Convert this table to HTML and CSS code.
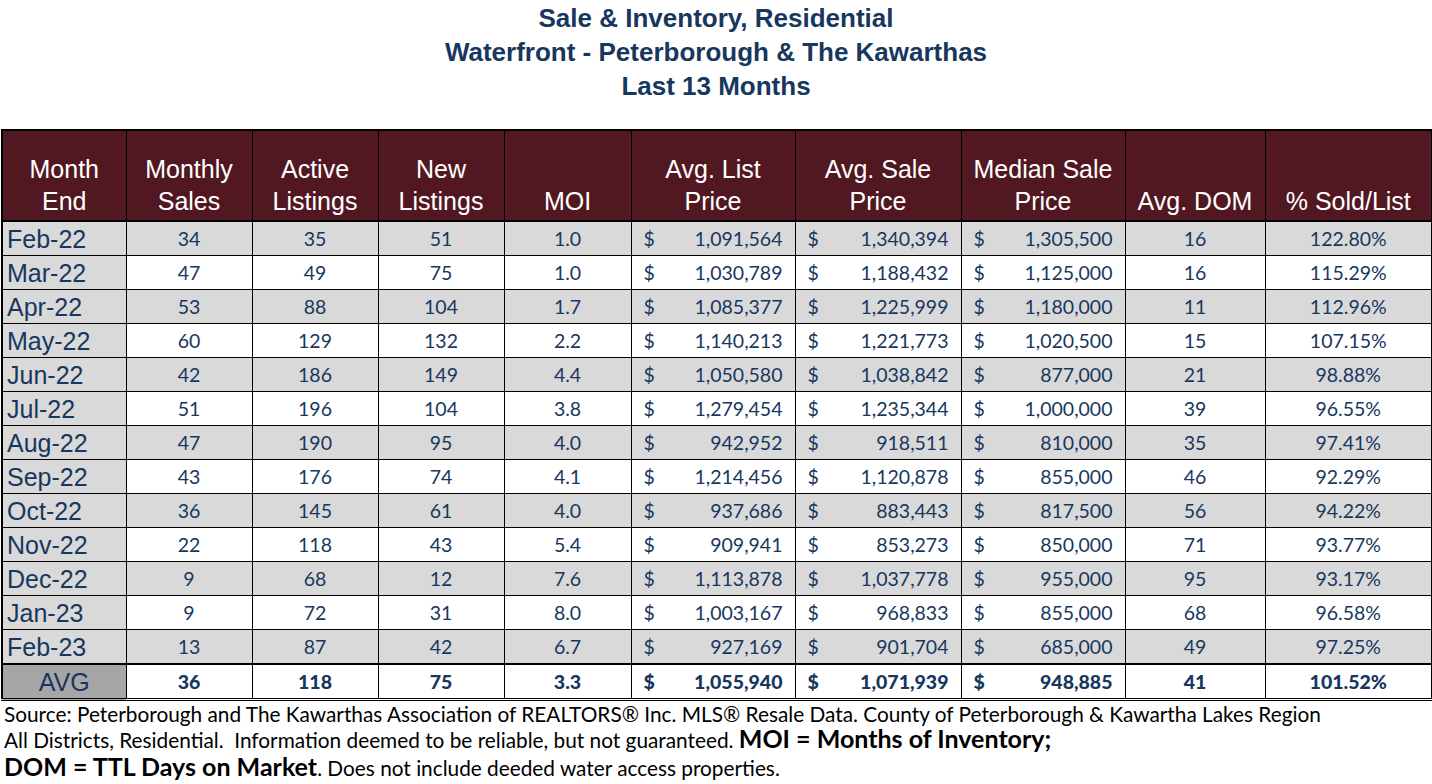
FILE: index.html
```html
<!DOCTYPE html>
<html>
<head>
<meta charset="utf-8">
<link rel="stylesheet" href="styles.css">
</head>
<body>
<div class="page">
  <div class="title">
    <div>Sale &amp; Inventory, Residential</div>
    <div>Waterfront - Peterborough &amp; The Kawarthas</div>
    <div>Last 13 Months</div>
  </div>
  <table class="grid">
    <colgroup>
      <col class="c1"><col class="c2"><col class="c3"><col class="c4"><col class="c5">
      <col class="c6"><col class="c7"><col class="c8"><col class="c9"><col class="c10">
    </colgroup>
    <thead>
      <tr>
        <th>Month<br>End</th>
        <th>Monthly<br>Sales</th>
        <th>Active<br>Listings</th>
        <th>New<br>Listings</th>
        <th>MOI</th>
        <th>Avg. List<br>Price</th>
        <th>Avg. Sale<br>Price</th>
        <th>Median Sale<br>Price</th>
        <th>Avg. DOM</th>
        <th>% Sold/List</th>
      </tr>
    </thead>
    <tbody>
      <tr class="g"><td class="m">Feb-22</td><td>34</td><td>35</td><td>51</td><td>1.0</td><td class="d"><span class="cur">$</span>1,091,564</td><td class="d"><span class="cur">$</span>1,340,394</td><td class="d"><span class="cur">$</span>1,305,500</td><td>16</td><td>122.80%</td></tr>
      <tr><td class="m">Mar-22</td><td>47</td><td>49</td><td>75</td><td>1.0</td><td class="d"><span class="cur">$</span>1,030,789</td><td class="d"><span class="cur">$</span>1,188,432</td><td class="d"><span class="cur">$</span>1,125,000</td><td>16</td><td>115.29%</td></tr>
      <tr class="g"><td class="m">Apr-22</td><td>53</td><td>88</td><td>104</td><td>1.7</td><td class="d"><span class="cur">$</span>1,085,377</td><td class="d"><span class="cur">$</span>1,225,999</td><td class="d"><span class="cur">$</span>1,180,000</td><td>11</td><td>112.96%</td></tr>
      <tr><td class="m">May-22</td><td>60</td><td>129</td><td>132</td><td>2.2</td><td class="d"><span class="cur">$</span>1,140,213</td><td class="d"><span class="cur">$</span>1,221,773</td><td class="d"><span class="cur">$</span>1,020,500</td><td>15</td><td>107.15%</td></tr>
      <tr class="g"><td class="m">Jun-22</td><td>42</td><td>186</td><td>149</td><td>4.4</td><td class="d"><span class="cur">$</span>1,050,580</td><td class="d"><span class="cur">$</span>1,038,842</td><td class="d"><span class="cur">$</span>877,000</td><td>21</td><td>98.88%</td></tr>
      <tr><td class="m">Jul-22</td><td>51</td><td>196</td><td>104</td><td>3.8</td><td class="d"><span class="cur">$</span>1,279,454</td><td class="d"><span class="cur">$</span>1,235,344</td><td class="d"><span class="cur">$</span>1,000,000</td><td>39</td><td>96.55%</td></tr>
      <tr class="g"><td class="m">Aug-22</td><td>47</td><td>190</td><td>95</td><td>4.0</td><td class="d"><span class="cur">$</span>942,952</td><td class="d"><span class="cur">$</span>918,511</td><td class="d"><span class="cur">$</span>810,000</td><td>35</td><td>97.41%</td></tr>
      <tr><td class="m">Sep-22</td><td>43</td><td>176</td><td>74</td><td>4.1</td><td class="d"><span class="cur">$</span>1,214,456</td><td class="d"><span class="cur">$</span>1,120,878</td><td class="d"><span class="cur">$</span>855,000</td><td>46</td><td>92.29%</td></tr>
      <tr class="g"><td class="m">Oct-22</td><td>36</td><td>145</td><td>61</td><td>4.0</td><td class="d"><span class="cur">$</span>937,686</td><td class="d"><span class="cur">$</span>883,443</td><td class="d"><span class="cur">$</span>817,500</td><td>56</td><td>94.22%</td></tr>
      <tr><td class="m">Nov-22</td><td>22</td><td>118</td><td>43</td><td>5.4</td><td class="d"><span class="cur">$</span>909,941</td><td class="d"><span class="cur">$</span>853,273</td><td class="d"><span class="cur">$</span>850,000</td><td>71</td><td>93.77%</td></tr>
      <tr class="g"><td class="m">Dec-22</td><td>9</td><td>68</td><td>12</td><td>7.6</td><td class="d"><span class="cur">$</span>1,113,878</td><td class="d"><span class="cur">$</span>1,037,778</td><td class="d"><span class="cur">$</span>955,000</td><td>95</td><td>93.17%</td></tr>
      <tr><td class="m">Jan-23</td><td>9</td><td>72</td><td>31</td><td>8.0</td><td class="d"><span class="cur">$</span>1,003,167</td><td class="d"><span class="cur">$</span>968,833</td><td class="d"><span class="cur">$</span>855,000</td><td>68</td><td>96.58%</td></tr>
      <tr class="g"><td class="m">Feb-23</td><td>13</td><td>87</td><td>42</td><td>6.7</td><td class="d"><span class="cur">$</span>927,169</td><td class="d"><span class="cur">$</span>901,704</td><td class="d"><span class="cur">$</span>685,000</td><td>49</td><td>97.25%</td></tr>
    </tbody>
    <tfoot>
      <tr class="avg"><td class="m">AVG</td><td>36</td><td>118</td><td>75</td><td>3.3</td><td class="d"><span class="cur">$</span>1,055,940</td><td class="d"><span class="cur">$</span>1,071,939</td><td class="d"><span class="cur">$</span>948,885</td><td>41</td><td>101.52%</td></tr>
    </tfoot>
  </table>
  <div class="notes">
    <p class="l1">Source: Peterborough and The Kawarthas Association of REALTORS® Inc. MLS® Resale Data. County of Peterborough &amp; Kawartha Lakes Region</p>
    <p class="l2">All Districts, Residential.&nbsp; Information deemed to be reliable, but not guaranteed. <b>MOI = Months of Inventory;</b></p>
    <p class="l3"><b>DOM = TTL Days on Market</b>. Does not include deeded water access properties.</p>
  </div>
</div>
</body>
</html>
```
FILE: styles.css
```css
html, body {
  margin: 0;
  padding: 0;
  background: #ffffff;
}
.page {
  width: 1432px;
  padding-top: 1px;
}
.title {
  font-family: "Liberation Sans", Arial, sans-serif;
  font-weight: bold;
  font-size: 26px;
  line-height: 34px;
  color: #17375e;
  text-align: center;
  margin-bottom: 26px;
}
.grid {
  margin-left: 1px;
  width: 1430px;
  table-layout: fixed;
  border-collapse: collapse;
  border: 2px solid #000;
}
.c1 { width: 124px; }
.c2 { width: 126px; }
.c3 { width: 126px; }
.c4 { width: 126px; }
.c5 { width: 127px; }
.c6 { width: 164px; }
.c7 { width: 166px; }
.c8 { width: 164px; }
.c9 { width: 140px; }
.c10 { width: 167px; }
.grid th {
  background: #521821;
  color: #ffffff;
  font-family: "Liberation Sans", Arial, sans-serif;
  font-weight: normal;
  font-size: 25px;
  line-height: 32px;
  height: 86px;
  vertical-align: bottom;
  padding: 0 2px 3px;
  border: 1px solid #000;
  border-bottom: 2px solid #000;
  text-align: center;
}
.grid td {
  font-family: Lato, "Open Sans", sans-serif;
  font-size: 19.5px;
  color: #17375e;
  height: 33px;
  padding: 0 12px;
  border: 1px solid #000;
  text-align: center;
  vertical-align: middle;
  line-height: 24px;
}
.grid tr.g td {
  background: #d9d9d9;
}
.grid td.m {
  background: #d9d9d9;
  text-align: left;
  padding: 0 4px;
  font-family: "Liberation Sans", Arial, sans-serif;
  font-size: 25px;
}
.grid td.d {
  text-align: right;
  padding: 0 12px 0 12px;
}
.cur {
  float: left;
}
.grid tbody tr:last-child td {
  border-bottom: 2px solid #000;
}
.grid tr.avg td {
  font-weight: 900;
  height: 33px;
  background: #ffffff;
  border-bottom: 3px double #000;
}
.grid tr.avg td.m {
  background: #a6a6a6;
  font-weight: normal;
  text-align: center;
}
.notes {
  font-family: Lato, "Open Sans", sans-serif;
  color: #000;
  padding-left: 4px;
}
.notes p {
  margin: 0;
  white-space: nowrap;
}
.l1 {
  font-size: 20.8px;
  line-height: 25px;
}
.l2 {
  font-size: 20.8px;
  line-height: 25px;
}
.l2 b, .l3 b {
  font-size: 25px;
  font-weight: bold;
}
.l3 {
  font-size: 20.8px;
  line-height: 29px;
}
```
